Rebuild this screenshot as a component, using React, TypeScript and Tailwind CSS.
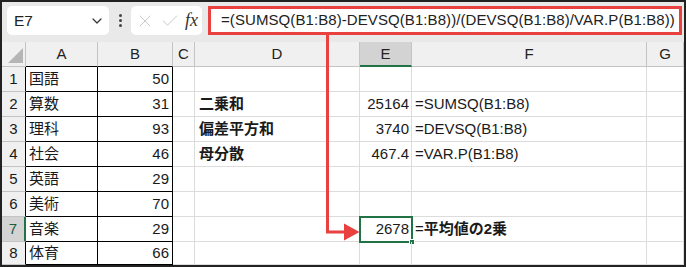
import React from 'react';
import { ChevronDown, X, Check } from 'lucide-react';

type Row = {
  n: number;
  a: string;
  b: string;
  d?: string;
  e?: string;
  f?: React.ReactNode;
};

const rows: Row[] = [
  { n: 1, a: '国語', b: '50' },
  { n: 2, a: '算数', b: '31', d: '二乗和', e: '25164', f: '=SUMSQ(B1:B8)' },
  { n: 3, a: '理科', b: '93', d: '偏差平方和', e: '3740', f: '=DEVSQ(B1:B8)' },
  { n: 4, a: '社会', b: '46', d: '母分散', e: '467.4', f: '=VAR.P(B1:B8)' },
  { n: 5, a: '英語', b: '29' },
  { n: 6, a: '美術', b: '70' },
  {
    n: 7,
    a: '音楽',
    b: '29',
    e: '2678',
    f: (
      <>
        =<span className="font-bold">平均値の2乗</span>
      </>
    ),
  },
  { n: 8, a: '体育', b: '66' },
];

const grid = 'border-r border-b border-[#dcdcdc]';

function Toolbar() {
  return (
    <div className="flex h-[40px] items-start bg-[#e9e9e9] pl-[5px] pt-[4px] pr-[2px]">
      <div className="flex h-[29px] w-[102px] items-center justify-between rounded-[5px] bg-white pl-[7px] pr-[4px] text-[15.5px] text-[#222]">
        <span>E7</span>
        <ChevronDown className="h-[16px] w-[16px] text-[#333]" strokeWidth={1.8} />
      </div>
      <div className="flex h-[29px] w-[22px] flex-col items-center justify-center gap-[2px]">
        <span className="h-[3px] w-[3px] rounded-full bg-[#444]" />
        <span className="h-[3px] w-[3px] rounded-full bg-[#444]" />
        <span className="h-[3px] w-[3px] rounded-full bg-[#444]" />
      </div>
      <div className="flex h-[29px] w-[71px] items-center gap-[5px] rounded-[5px] bg-white pl-[4px]">
        <X className="h-[20px] w-[20px] text-[#c9c9c9]" strokeWidth={1.2} />
        <Check className="h-[20px] w-[20px] text-[#c9c9c9]" strokeWidth={1.2} />
        <span className="font-['Liberation_Serif',serif] text-[18px] italic text-[#333]">fx</span>
      </div>
      <div className="ml-[6px] flex h-[29px] flex-1 items-center overflow-hidden whitespace-nowrap border-[3px] border-[#e8413f] bg-white pl-[10px] text-[15px] tracking-[0.08px] text-[#222]">
        =(SUMSQ(B1:B8)-DEVSQ(B1:B8))/(DEVSQ(B1:B8)/VAR.P(B1:B8))
      </div>
    </div>
  );
}

function HeaderRow() {
  const h = 'flex items-center justify-center border-r border-b border-[#c4c4c4] text-[15px] text-[#222]';
  return (
    <div className="flex h-[25px] bg-[#f0f0f0]">
      <div className={`${h} w-[24px] items-end justify-end pb-[3px] pr-[2px]`}>
        <svg width="15" height="15" viewBox="0 0 15 15">
          <polygon points="15,0 15,15 0,15" fill="#b5b5b5" />
        </svg>
      </div>
      <div className={`${h} w-[72px] border-b-black`}>A</div>
      <div className={`${h} w-[75px] border-b-black`}>B</div>
      <div className={`${h} w-[22px]`}>C</div>
      <div className={`${h} w-[165px]`}>D</div>
      <div className={`${h} w-[52px] border-b-2 border-b-[#217346] bg-[#d3d3d3] pt-[1px] text-[#1d6b45]`}>E</div>
      <div className={`${h} w-[235px]`}>F</div>
      <div className={`${h} w-[37px]`}>G</div>
    </div>
  );
}

function DataRow({ r }: { r: Row }) {
  const sel = r.n === 7;
  const last = r.n === 8;
  return (
    <div className={`flex ${last ? 'h-[23px]' : 'h-[25px]'} bg-white text-[15px] text-[#1a1a1a]`}>
      <div
        className={`flex w-[24px] items-center justify-center border-b border-b-[#c4c4c4] ${
          sel ? 'border-r-2 border-r-[#217346] bg-[#d3d3d3] text-[#1d5c3c]' : 'border-r border-r-black bg-[#f0f0f0]'
        }`}
      >
        {r.n}
      </div>
      <div className="flex w-[72px] items-center border-r border-b border-black pl-[3px]">{r.a}</div>
      <div className="flex w-[75px] items-center justify-end border-r border-b border-black pr-[3px]">{r.b}</div>
      <div className={`w-[22px] ${grid}`} />
      <div className={`flex w-[165px] items-center pl-[4px] font-bold ${grid}`}>{r.d}</div>
      <div className={`relative flex w-[52px] items-center justify-end pr-[2px] ${grid}`}>
        {r.e}
        {sel && (
          <>
            <div className="absolute -left-[1px] -top-[1px] h-[27px] w-[54px] border-2 border-[#217346]" />
            <div className="absolute -bottom-[4px] -right-[4px] h-[6px] w-[6px] border border-white bg-[#217346]" />
          </>
        )}
      </div>
      <div className={`flex w-[235px] items-center pl-[3px] ${grid}`}>{r.f}</div>
      <div className={`w-[37px] ${grid}`} />
    </div>
  );
}

export default function App() {
  return (
    <div className="relative h-[267px] w-[686px] overflow-hidden bg-[#222] p-[2px] font-['Liberation_Sans','Noto_Sans_CJK_JP',sans-serif]">
      <div className="h-[263px] w-[682px] overflow-hidden bg-white">
        <Toolbar />
        <HeaderRow />
        {rows.map((r) => (
          <DataRow key={r.n} r={r} />
        ))}
      </div>
      <svg className="pointer-events-none absolute left-0 top-0" width="686" height="267" viewBox="0 0 686 267">
        <path d="M327.5 35 V232 H346" fill="none" stroke="#e8413f" strokeWidth="3" />
        <polygon points="344,223.5 359.5,232 344,240.5" fill="#e8413f" />
      </svg>
    </div>
  );
}
